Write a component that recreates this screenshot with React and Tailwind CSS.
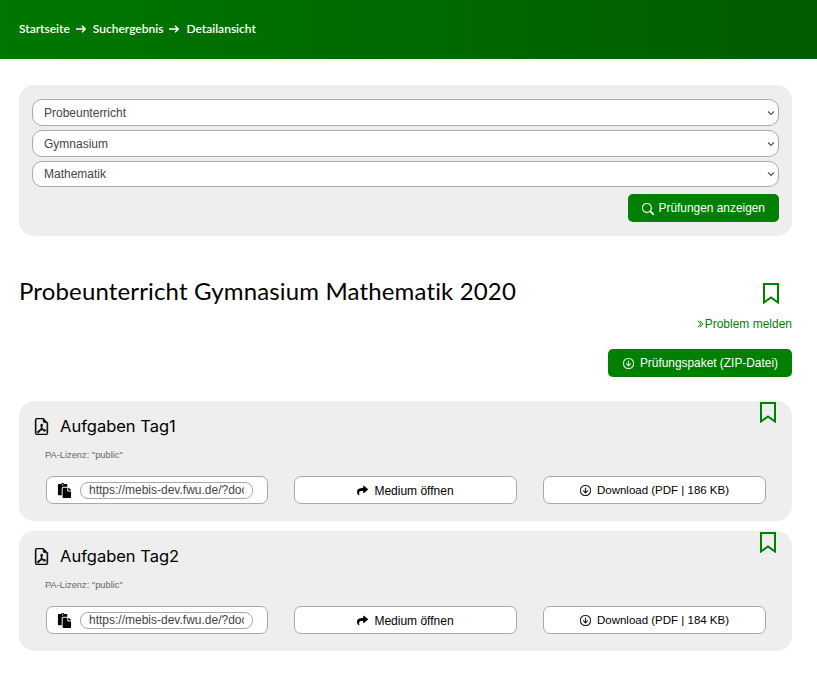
import React from "react";
import { FaPaste, FaShare } from "react-icons/fa";
import { BsFileEarmarkPdf, BsArrowDownCircle, BsSearch, BsChevronDoubleRight } from "react-icons/bs";

const sans = "font-['Liberation_Sans',Arial,sans-serif]";
const disp = "font-['Lato','Noto_Sans',sans-serif]";

function Bookmark({ className }) {
  return (
    <svg className={className} width="16" height="21" viewBox="0 0 16 21" fill="none" stroke="#008000" strokeWidth="2">
      <path d="M1 1 H15 V19.5 L8 14.5 L1 19.5 Z" />
    </svg>
  );
}

function Arrow() {
  return (
    <svg className="ml-[6px] mr-[7px]" width="10" height="10" viewBox="0 0 10 10" fill="none" stroke="white" strokeWidth="1.5">
      <path d="M0 5 H9 M6 1.8 L9.2 5 L6 8.2" />
    </svg>
  );
}

function Sel({ label, h = "h-[27px]" }) {
  return (
    <div className={`flex items-center justify-between ${h} rounded-[10px] border border-[#a9a9b0] bg-white pl-[11px] pr-[3px] text-[#444] text-[12px]`}>
      <span>{label}</span>
      <svg width="8" height="6" viewBox="0 0 8 6" fill="none" stroke="#555" strokeWidth="1.2"><path d="M1 1.5 L4 4.5 L7 1.5" /></svg>
    </div>
  );
}

function Card({ title, size }) {
  return (
    <div className="relative rounded-[15px] bg-[#eeeeee] h-[120px] pl-[14px] pr-[26px] pt-[15px]">
      <Bookmark className="absolute right-[16px] top-px" />
      <div className="flex items-center h-[20px]">
        <BsFileEarmarkPdf className="text-black text-[17px] stroke-[0.4px]" />
        <h3 className="ml-[10px] text-[16.5px] text-black leading-none font-['Inter',sans-serif]">{title}</h3>
      </div>
      <p className="mt-[13px] ml-[12px] text-[9.3px] leading-[12px] text-[#666]">PA-Lizenz: "public"</p>
      <div className="mt-[15px] ml-[13px] grid grid-cols-[222px_223px_223px] gap-x-[26px] text-[12px] text-black">
        <div className="flex items-center h-[28px] rounded-[7px] border border-[#a9a9a9] bg-white pl-[10px] pr-[14px]">
          <FaPaste className="text-black text-[15px] shrink-0" />
          <input
            readOnly
            value="https://mebis-dev.fwu.de/?doc=2436"
            className="ml-[8px] h-[17px] flex-1 min-w-0 rounded-[8px] border border-[#a9a9a9] px-[8px] text-[#444] text-[12px] outline-none"
          />
        </div>
        <div className="flex items-center justify-center gap-[6px] h-[28px] pt-px rounded-[7px] border border-[#a9a9a9] bg-white">
          <FaShare className="text-black text-[11px]" />
          <span>Medium öffnen</span>
        </div>
        <div className="flex items-center justify-center gap-[6px] h-[28px] pt-px rounded-[7px] border border-[#a9a9a9] bg-white text-[11.5px]">
          <BsArrowDownCircle className="text-black text-[11px] stroke-[0.5px]" />
          <span>Download (PDF | {size} KB)</span>
        </div>
      </div>
    </div>
  );
}

export default function App() {
  return (
    <div className={`${sans} min-h-[675px] bg-white`}>
      <header className="h-[59px] bg-gradient-to-r from-[#007700] to-[#005c00] flex items-center pl-[19px] pb-[1px] text-white text-[12px] font-['Lato',sans-serif] font-semibold">
        <span>Startseite</span>
        <Arrow />
        <span>Suchergebnis</span>
        <Arrow />
        <span>Detailansicht</span>
      </header>

      <main className="pl-[19px] pr-[25px] pt-[26px]">
        <section className="rounded-[15px] bg-[#eeeeee] px-[13px] pt-[14px] h-[151px]">
          <div className="flex flex-col gap-[4px]">
            <Sel label="Probeunterricht" />
            <Sel label="Gymnasium" />
            <Sel label="Mathematik" h="h-[26px]" />
          </div>
          <div className="flex justify-end mt-[7px]">
            <button className="flex items-center gap-[5px] h-[28px] pt-px px-[14px] rounded-[5px] bg-[green] text-white text-[11.9px]">
              <BsSearch className="text-[12px] stroke-[0.5px]" />
              Prüfungen anzeigen
            </button>
          </div>
        </section>

        <div className="flex justify-between mt-[40px]">
          <h1 className={`${disp} text-[24px] leading-[30px] text-black tracking-[0.15px]`}>Probeunterricht Gymnasium Mathematik 2020</h1>
          <Bookmark className="mr-[13px] mt-[7px]" />
        </div>
        <div className="flex justify-end items-center mt-[11px] text-[green] text-[12px] leading-[14px]">
          <BsChevronDoubleRight className="text-[8px] mr-[1px] stroke-[0.5px]" />
          Problem melden
        </div>
        <div className="flex justify-end mt-[18px]">
          <button className="flex items-center gap-[6px] h-[28px] pt-px pl-[15px] pr-[14px] rounded-[5px] bg-[green] text-white text-[11.9px]">
            <BsArrowDownCircle className="text-[11px] stroke-[0.5px]" />
            Prüfungspaket (ZIP-Datei)
          </button>
        </div>

        <div className="mt-[24px] flex flex-col gap-[10px]">
          <Card title="Aufgaben Tag1" size="186" />
          <Card title="Aufgaben Tag2" size="184" />
        </div>
      </main>
    </div>
  );
}
